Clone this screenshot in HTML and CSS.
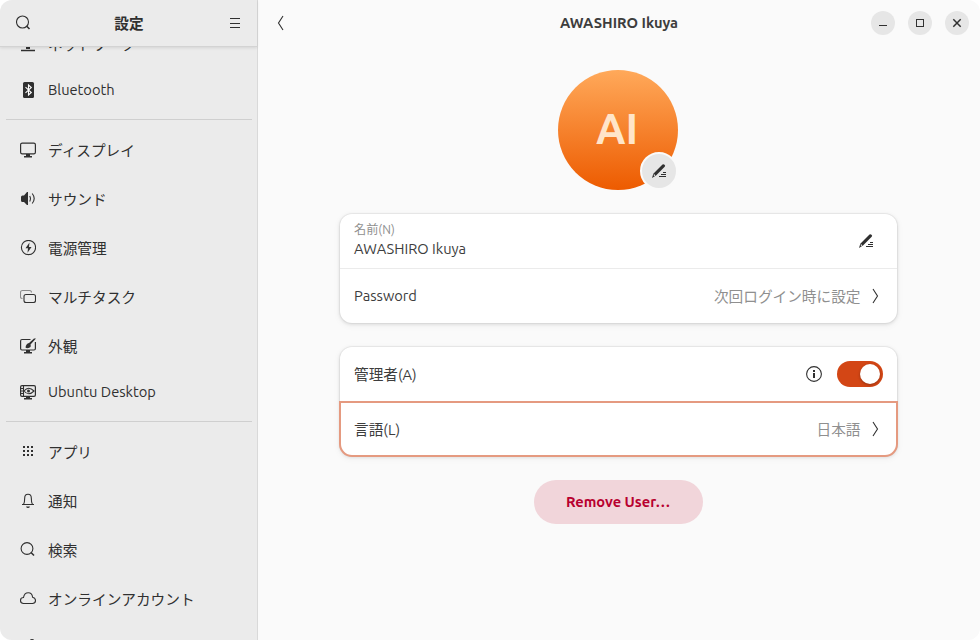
FILE: index.html
```html
<!DOCTYPE html>
<html lang="ja">
<head>
    <meta charset="UTF-8">
    <meta name="viewport" content="width=device-width, initial-scale=1.0">
    <title>設定</title>
    <link rel="stylesheet" href="styles.css">
</head>
<body>
    <div class="window">
        <aside class="sidebar">
            <header class="sidebar-header">
                <svg class="icon" viewBox="0 0 16 16"><circle cx="6.5" cy="7" r="6"/><path d="M10.5 11l3 3" stroke-width="1.6"/></svg>
                <h1>設定</h1>
                <svg class="icon" viewBox="0 0 16 16"><path d="M3 3.5h10M3 8.5h10M3 12.5h10" class="crisp"/></svg>
            </header>
            <nav class="sidebar-scroll">
                <ul class="menu">
                    <li>
                        <svg class="icon" viewBox="0 0 16 16"><path d="M2.5 1.5h11v8h-11zM1 14.5h14" stroke-width="1.3"/><path d="M6 11h4v2H6z" class="fill"/></svg>
                        <span>ネットワーク</span>
                    </li>
                    <li class="latin">
                        <svg class="icon" viewBox="0 0 16 16"><rect x="3" y="0" width="11" height="16" rx="1.5" class="fill"/><path d="M5.5 5.2l5.8 5.3-2.8 2.5V3l2.8 2.5-5.8 5.3" class="light"/></svg>
                        <span>Bluetooth</span>
                    </li>
                    <li class="separator"></li>
                    <li>
                        <svg class="icon" viewBox="0 0 16 16"><rect x="0.6" y="1.1" width="14.8" height="10.8" rx="1.6" stroke-width="1.2"/><path d="M6 12h4v2h2v1.5H4V14h2z" class="fill"/></svg>
                        <span>ディスプレイ</span>
                    </li>
                    <li>
                        <svg class="icon" viewBox="0 0 16 16"><path d="M1 6q0-1.5 1.5-1.5H4L7 1h1v13H7l-3-3H2.5Q1 11 1 9.5z" class="fill"/><path d="M9.7 5q1.5 2.5 0 5.5M12.2 2.5q4 5 0 10"/></svg>
                        <span>サウンド</span>
                    </li>
                    <li>
                        <svg class="icon" viewBox="0 0 16 16"><circle cx="8.5" cy="7.5" r="7.1"/><path d="M9.5 2.5L5.5 8.2H8l-.5 4.5 4-5.7H9z" class="fill"/></svg>
                        <span>電源管理</span>
                    </li>
                    <li>
                        <svg class="icon" viewBox="0 0 16 16"><path d="M2.5 9.5Q.5 9.5.5 8V3.500q0-2 2-2h7q2 0 2 2" class="dim"/><rect x="4" y="5.5" width="11.5" height="8" rx="2"/></svg>
                        <span>マルチタスク</span>
                    </li>
                    <li>
                        <svg class="icon" viewBox="0 0 16 16"><path d="M10.5 1.5H2Q.6 1.5.6 3v7.5Q.6 12 2 12h12q1.4 0 1.4-1.5V4" stroke-width="1.2"/><path d="M6 12h4v2h2v1.5H4V14h2z" class="fill"/><path d="M5.5 9.5q.5-4 3.500-4.500l5-4.500h2L10.500 6.500q1 3-2 3.500-2 .5-3-.5z" class="fill"/></svg>
                        <span>外観</span>
                    </li>
                    <li class="latin">
                        <svg class="icon" viewBox="0 0 16 16"><rect x="0.6" y="1.6" width="14.8" height="10.8" rx="1.4" stroke-width="1.2"/><path d="M6 12h4v2h2v1.5H4V14h2z" class="fill"/><path d="M3.5 1.5v11M1 4.5h2.5M1 7h2.5M1 9.5h2.5"/><path d="M4 7q4.5-5.5 10 0-5.5 5.5-10 0z"/><circle cx="8.5" cy="7" r="1.5" class="fill"/></svg>
                        <span>Ubuntu Desktop</span>
                    </li>
                    <li class="separator"></li>
                    <li>
                        <svg class="icon" viewBox="0 0 16 16"><path d="M3 2h2v2H3zM7 2h2v2H7zM11 2h2v2h-2zM3 6h2v2H3zM7 6h2v2H7zM11 6h2v2h-2zM3 10h2v2H3zM7 10h2v2H7zM11 10h2v2h-2z" class="fill"/></svg>
                        <span>アプリ</span>
                    </li>
                    <li>
                        <svg class="icon" viewBox="0 0 16 16"><path d="M2 11.5h12M3.5 11.5Q4.7 9.5 4.7 5q0-3.8 3.3-3.8T11.3 5q0 4.5 1.2 6.5"/><path d="M6 13.5h4q-.5 1.500-2 1.500t-2-1.500z" class="fill"/></svg>
                        <span>通知</span>
                    </li>
                    <li>
                        <svg class="icon" viewBox="0 0 16 16"><circle cx="7" cy="6.5" r="5.9"/><path d="M11 10.500l3 3" stroke-width="1.6"/></svg>
                        <span>検索</span>
                    </li>
                    <li>
                        <svg class="icon" viewBox="0 0 16 16"><path d="M3.5 12.5C1.500 12.500.5 11 .5 9.500s1-3 3-3C4 3.500 6 1.800 8.300 1.800c2.500 0 4 1.700 4.300 4.400 1.800.3 2.900 1.500 2.900 3.300 0 1.700-1 3-3 3z"/></svg>
                        <span>オンラインアカウント</span>
                    </li>
                    <li class="sharing">
                        <svg class="icon" viewBox="0 0 16 16"><circle cx="12" cy="2.5" r="2.5" class="fill"/><circle cx="3" cy="8" r="2"/><circle cx="12" cy="13" r="2"/><path d="M5 7l5-3M5 9l5 3"/></svg>
                    </li>
                </ul>
            </nav>
        </aside>

        <main class="content">
            <header class="content-header">
                <svg class="icon back" viewBox="0 0 16 16"><path d="M9 1L4.5 8 9 15"/></svg>
                <h2>AWASHIRO Ikuya</h2>
                <div class="window-controls">
                    <button aria-label="最小化"><svg viewBox="0 0 16 16"><path d="M4 10.5h8" class="crisp"/></svg></button>
                    <button aria-label="最大化"><svg viewBox="0 0 16 16"><path d="M4.5 4.5h7v7h-7z" class="crisp"/></svg></button>
                    <button aria-label="閉じる"><svg viewBox="0 0 16 16"><path d="M4.3 4.3l7.4 7.4M11.7 4.3l-7.4 7.4" stroke-width="1.5"/></svg></button>
                </div>
            </header>

            <div class="avatar">
                <span>AI</span>
                <button class="avatar-edit" aria-label="編集">
                    <svg class="icon" viewBox="0 0 16 16"><path d="M1 15l1.3-4.3L11.5 1.500q1-.8 2 .2 1.200 1 .2 2L5 12.500z" class="fill"/><path d="M2.800 11.700l1.200 1" class="light"/><path d="M12 9.500h3M10 11.500h5M8 13.500h7" class="crisp"/></svg>
                </button>
            </div>

            <section class="card">
                <div class="row">
                    <div class="field">
                        <small>名前(N)</small>
                        <span>AWASHIRO Ikuya</span>
                    </div>
                    <svg class="icon pencil" viewBox="0 0 16 16"><path d="M1 15l1.3-4.3L11.5 1.500q1-.8 2 .2 1.200 1 .2 2L5 12.500z" class="fill"/><path d="M2.800 11.700l1.200 1" class="light"/><path d="M12 9.500h3M10 11.500h5M8 13.500h7" class="crisp"/></svg>
                </div>
                <div class="row">
                    <span class="label">Password</span>
                    <span class="value">次回ログイン時に設定</span>
                    <svg class="icon" viewBox="0 0 16 16"><path d="M6 1l4.5 7L6 15"/></svg>
                </div>
            </section>

            <section class="card">
                <div class="row">
                    <span class="label cjk">管理者(A)</span>
                    <svg class="icon info" viewBox="0 0 16 16"><circle cx="8" cy="8" r="7.4"/><path d="M7 4h2v2H7zM7 7h2v5H7z" class="fill"/></svg>
                    <span class="switch"></span>
                </div>
                <div class="row focused">
                    <span class="label cjk">言語(L)</span>
                    <span class="value">日本語</span>
                    <svg class="icon" viewBox="0 0 16 16"><path d="M6 1l4.5 7L6 15"/></svg>
                </div>
            </section>

            <button class="remove-btn">Remove User…</button>
        </main>
    </div>
</body>
</html>
```

FILE: styles.css
```css
* {
    box-sizing: border-box;
}

body {
    margin: 0;
    background-color: #fff;
    color: #3d3d3d;
    font-family: 'Ubuntu', 'Noto Sans', 'Noto Sans CJK JP', sans-serif;
    font-size: 14.667px;
    line-height: 20px;
}

h1, h2, ul {
    margin: 0;
    padding: 0;
    font-size: inherit;
}

button {
    border: none;
    padding: 0;
    font: inherit;
    color: inherit;
}

.window {
    display: flex;
    width: 980px;
    height: 640px;
    border-radius: 12px;
    overflow: hidden;
    background-color: #fafafa;
}

/* icons */
svg {
    width: 16px;
    height: 16px;
    flex: none;
    fill: none;
    stroke: #303030;
    stroke-width: 1.1;
}

svg .fill {
    fill: #303030;
    stroke: none;
}

svg .light {
    stroke: #fff;
}

svg .dim {
    stroke: #8a8a8a;
}

svg .crisp {
    stroke-width: 1;
    shape-rendering: crispEdges;
}

/* sidebar */
.sidebar {
    display: flex;
    flex-direction: column;
    width: 258px;
    flex: none;
    background-color: #ebebeb;
    border-right: 1px solid #d9d9d9;
    color: #303030;
}

.sidebar-header {
    display: flex;
    align-items: center;
    justify-content: space-between;
    height: 47px;
    flex: none;
    padding: 0 14px 0 16px;
    border-bottom: 1px solid #d3d3d3;
    box-shadow: 0 1px 3px rgba(0, 0, 0, 0.1);
    z-index: 1;
}

.sidebar-header h1 {
    padding-top: 2px;
    margin-right: 1px;
}

.sidebar-scroll {
    flex: 1;
    overflow: hidden;
}

.menu {
    list-style: none;
    margin-top: -27px;
    padding: 0 5px 0 6px;
}

.menu li {
    display: flex;
    align-items: center;
    gap: 12px;
    height: 49px;
    padding-left: 14px;
}

.menu li .icon {
    margin-bottom: 2px;
}

.menu .latin {
    height: 44px;
    padding-bottom: 2px;
}

.menu .latin .icon {
    margin: 0;
}

.menu .sharing .icon {
    margin-bottom: 4px;
}

.menu .separator {
    height: 1px;
    padding: 0;
    margin: 6px 0;
    background-color: #cfcfcf;
}

/* content */
.content {
    display: flex;
    flex-direction: column;
    align-items: center;
    flex: 1;
    padding-right: 1px;
}

.content-header {
    display: grid;
    grid-template-columns: 1fr auto 1fr;
    align-items: center;
    width: 100%;
    height: 46px;
    padding: 0 10px 0 11px;
}

.back {
    margin-left: 5px;
}

.window-controls {
    display: flex;
    justify-content: flex-end;
    gap: 13px;
}

.window-controls button {
    display: flex;
    align-items: center;
    justify-content: center;
    width: 24px;
    height: 24px;
    border-radius: 50%;
    background-color: #e6e6e6;
}

.avatar {
    position: relative;
    display: flex;
    align-items: center;
    justify-content: center;
    width: 120px;
    height: 120px;
    margin: 24px 1px 0 0;
    padding: 0 2px 2px 0;
    border-radius: 50%;
    background: linear-gradient(#ffa95a, #ed5b00);
    color: #ffe5c9;
    font-size: 42px;
    font-weight: 600;
}

.avatar-edit {
    position: absolute;
    right: 0;
    bottom: 0;
    display: flex;
    align-items: center;
    justify-content: center;
    width: 38px;
    height: 38px;
    border: 2px solid #fafafa;
    border-radius: 50%;
    background-color: #e6e6e6;
}

.card {
    width: 557px;
    margin-top: 24px;
    border-radius: 12px;
    background-color: #fff;
    box-shadow: 0 0 0 1px rgba(0, 0, 0, 0.04), 0 1px 3px 1px rgba(0, 0, 0, 0.08), 0 2px 6px 2px rgba(0, 0, 0, 0.03);
}

.row {
    display: flex;
    align-items: center;
    height: 54px;
    padding: 0 14px;
}

.row + .row {
    height: 55px;
    border-top: 1px solid #ebebeb;
}

.field {
    display: flex;
    flex-direction: column;
    align-items: flex-start;
    flex: 1;
    padding-bottom: 2px;
}

.field small {
    font-size: 12.2px;
    line-height: 18px;
    color: #8f8f8f;
}

.label {
    flex: 1;
}

.label.cjk {
    padding-top: 2px;
}

.value {
    margin-right: 6.5px;
    padding-top: 2px;
    color: #8f8f8f;
}

.pencil {
    margin-right: 9px;
}

.info {
    margin-right: 15px;
}

.switch {
    display: flex;
    justify-content: flex-end;
    width: 46px;
    height: 26px;
    padding: 3px;
    border-radius: 13px;
    background-color: #d34615;
}

.switch::after {
    content: '';
    width: 20px;
    height: 20px;
    border-radius: 50%;
    background-color: #fff;
    box-shadow: 0 1px 3px rgba(0, 0, 0, 0.3);
}

.row + .row.focused {
    height: 54px;
    margin-top: 1px;
    border-top: none;
    border-radius: 0 0 12px 12px;
    outline: 2px solid #e59a80;
    outline-offset: -1px;
}

.remove-btn {
    width: 169px;
    height: 44px;
    margin-top: 24px;
    padding-right: 1px;
    border-radius: 22px;
    background-color: #f1d5da;
    color: #b8002f;
    font-weight: 600;
}
```
